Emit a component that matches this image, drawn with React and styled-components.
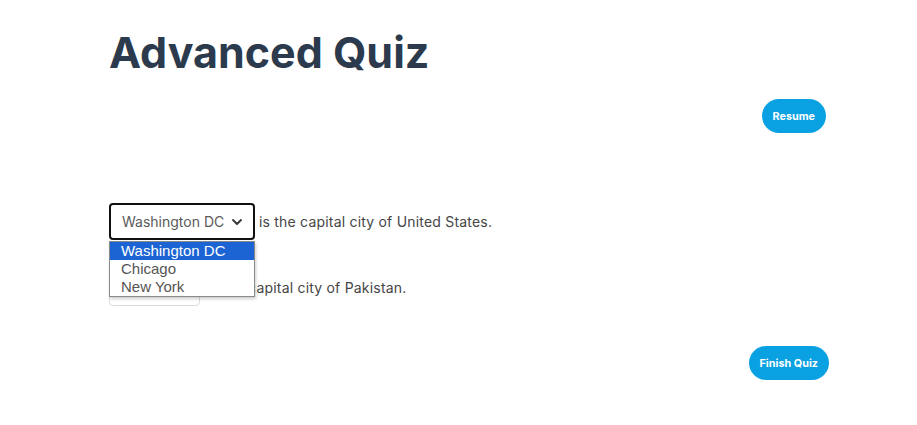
import React from "react";
import styled, { createGlobalStyle } from "styled-components";

const Global = createGlobalStyle`
  body {
    margin: 0;
    background: #ffffff;
    font-family: Inter, "Noto Sans", sans-serif;
  }
`;

const Page = styled.div`
  width: 720px;
  padding: 24px 0 0 109px;
`;

const Title = styled.h1`
  margin: 0;
  font-size: 43px;
  font-weight: 700;
  line-height: 56px;
  color: #2c3a4d;
`;

const ButtonRow = styled.div`
  display: flex;
  justify-content: flex-end;
  padding-right: ${(p) => p.$inset || 0}px;
  margin-top: ${(p) => p.$top}px;
`;

const Pill = styled.button`
  height: 34px;
  padding: 0 11px;
  border: none;
  border-radius: 17px;
  background: #0aa1e2;
  color: #ffffff;
  font-family: Inter, sans-serif;
  font-size: 10.8px;
  font-weight: 700;
`;

const Questions = styled.div`
  display: flex;
  flex-direction: column;
  gap: 29px;
  margin-top: 70px;
`;

const Row = styled.div`
  position: relative;
  display: flex;
  align-items: center;
  gap: ${(p) => p.$gap || 4}px;
  font-size: 14px;
  letter-spacing: 0.2px;
  color: #454545;
`;

const SelectBox = styled.div`
  box-sizing: border-box;
  height: 37px;
  width: ${(p) => p.$width}px;
  display: flex;
  align-items: center;
  justify-content: space-between;
  padding: 0 10px 0 11px;
  border: ${(p) => (p.$focus ? "2px solid #111" : "1px solid #dcdcdc")};
  border-radius: 4px;
  color: #5a5a5a;
  font-size: 14px;
  letter-spacing: 0;
`;

const Listbox = styled.ul`
  position: absolute;
  left: 0;
  top: 38px;
  width: 146px;
  box-sizing: border-box;
  margin: 0;
  padding: 0;
  list-style: none;
  background: #fff;
  border: 1px solid #8a8a8a;
  box-shadow: 1px 2px 3px rgba(0, 0, 0, 0.2);
  z-index: 5;
  font-family: "Liberation Sans", Arial, sans-serif;
  font-size: 15px;
  letter-spacing: 0;
`;

const Option = styled.li`
  height: 18px;
  line-height: 18px;
  padding-left: 11px;
  background: ${(p) => (p.$active ? "#1c64d4" : "transparent")};
  color: ${(p) => (p.$active ? "#ffffff" : "#555555")};
`;

const Chevron = () => (
  <svg width="12" height="12" viewBox="0 0 12 12" fill="none">
    <path d="M2 4l4 4 4-4" stroke="#333" strokeWidth="1.8" strokeLinecap="round" strokeLinejoin="round" />
  </svg>
);

export default function App() {
  return (
    <>
      <Global />
      <Page>
        <Title>Advanced Quiz</Title>
        <ButtonRow $top={19} $inset={3}>
          <Pill>Resume</Pill>
        </ButtonRow>
        <Questions>
          <Row>
            <SelectBox $focus $width={146}>
              <span>Washington DC</span>
              <Chevron />
            </SelectBox>
            <span>is the capital city of United States.</span>
            <Listbox>
              <Option $active>Washington DC</Option>
              <Option>Chicago</Option>
              <Option>New York</Option>
            </Listbox>
          </Row>
          <Row $gap={7}>
            <SelectBox $width={91}>
              <span>Lahore</span>
              <Chevron />
            </SelectBox>
            <span>is the capital city of Pakistan.</span>
          </Row>
        </Questions>
        <ButtonRow $top={40}>
          <Pill>Finish Quiz</Pill>
        </ButtonRow>
      </Page>
    </>
  );
}
